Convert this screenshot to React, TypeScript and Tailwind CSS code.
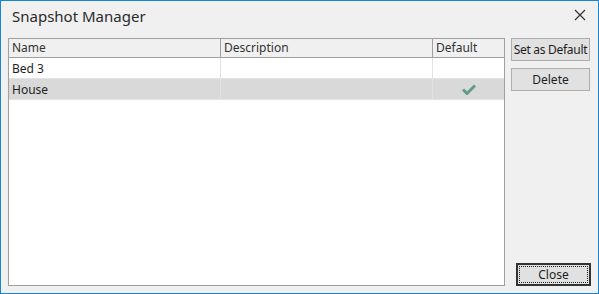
import React from 'react';

const rows = [
  { name: 'Bed 3', description: '', isDefault: false, selected: false },
  { name: 'House', description: '', isDefault: true, selected: true },
];

function CheckMark() {
  return (
    <svg width="14" height="11" viewBox="0 0 14 11">
      <path d="M1 5.5 L5 9.5 L13 1.5" fill="none" stroke="#5f9e86" strokeWidth="3" />
    </svg>
  );
}

export default function App() {
  const font = { fontFamily: '"Noto Sans", "Open Sans", sans-serif' };

  return (
    <div
      className="w-[599px] h-[294px] border border-[#1883d7] bg-[#f0f0f0] flex flex-col text-[12px] text-[#1e1e1e]"
      style={font}
    >
      {/* Title bar */}
      <div className="h-[36px] flex items-start justify-between pl-[11px] pr-[12px] pt-[4px] shrink-0">
        <span className="text-[15px] leading-[22px] text-[#2b2b2b]">Snapshot Manager</span>
        <svg width="12" height="12" viewBox="0 0 12 12" className="mt-[4px]">
          <path d="M1 1 L11 11 M11 1 L1 11" stroke="#333" strokeWidth="1.2" />
        </svg>
      </div>

      <div className="flex pl-[7px] gap-[6px] pt-[1px]">
        {/* Grid */}
        <div className="w-[497px] h-[248px] border border-[#a0a0a0] bg-white flex flex-col">
          <div className="flex h-[19px] bg-[#f0f0f0] border-b border-[#a0a0a0] leading-[18px] text-[#333]">
            <div className="w-[212px] pl-[3px] border-r border-[#a0a0a0]">Name</div>
            <div className="w-[212px] pl-[3px] border-r border-[#a0a0a0]">Description</div>
            <div className="flex-1 pl-[3px]">Default</div>
          </div>
          {rows.map((r) => (
            <div
              key={r.name}
              className={`flex h-[21px] border-b border-[#e3e3e3] leading-[21px] ${
                r.selected ? 'bg-[#d9d9d9]' : 'bg-white'
              }`}
            >
              <div className="w-[212px] pl-[3px] border-r border-[#e3e3e3]">{r.name}</div>
              <div className="w-[212px] pl-[3px] border-r border-[#e3e3e3]">{r.description}</div>
              <div className="flex-1 flex items-center justify-center">
                {r.isDefault && <CheckMark />}
              </div>
            </div>
          ))}
        </div>

        {/* Buttons */}
        <div className="w-[80px] h-[248px] flex flex-col">
          <button className="w-[79px] h-[23px] px-0 whitespace-nowrap tracking-[-0.3px] border border-[#adadad] bg-[#e1e1e1] text-[#1e1e1e]">
            Set as Default
          </button>
          <button className="w-[79px] h-[23px] mt-[7px] border border-[#adadad] bg-[#e1e1e1] text-[#1e1e1e]">
            Delete
          </button>
          <button className="mt-auto ml-auto w-[75px] h-[23px] border-2 border-[#333] bg-[#e1e1e1] p-[1px]">
            <span className="flex w-full h-full items-center justify-center border border-dotted border-[#222]">
              Close
            </span>
          </button>
        </div>
      </div>
    </div>
  );
}
